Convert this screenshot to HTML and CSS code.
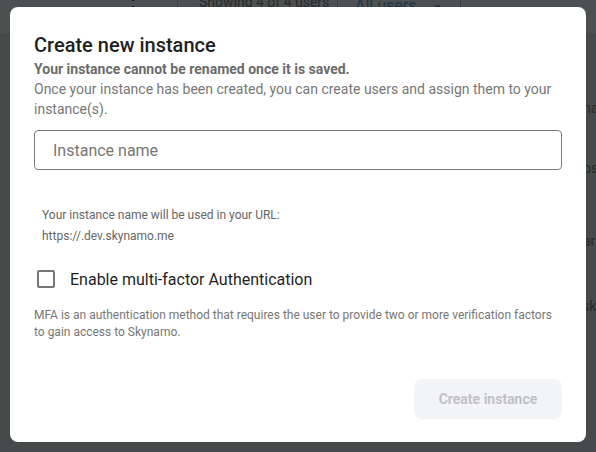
FILE: index.html
```html
<!DOCTYPE html>
<html>
<head>
<meta charset="utf-8">
<link rel="stylesheet" href="styles.css">
</head>
<body>
<div class="backdrop">
  <div class="bg-header">
    <span class="bg-dots">⋮</span>
    <span class="bg-divider"></span>
    <span class="bg-showing">Showing 4 of 4 users</span>
    <span class="bg-select">All users <span class="bg-caret">▼</span></span>
  </div>
  <div class="bg-right">
    <span class="bg-frag f1">na</span>
    <span class="bg-frag f2">os</span>
    <span class="bg-frag f3">ar</span>
    <span class="bg-frag f4">sk</span>
  </div>
</div>
<div class="dialog">
  <h1 class="title">Create new instance</h1>
  <p class="warn">Your instance cannot be renamed once it is saved.</p>
  <p class="desc">Once your instance has been created, you can create users and assign them to your instance(s).</p>
  <div class="field">Instance name</div>
  <div class="helper">
    <div>Your instance name will be used in your URL:</div>
    <div>https://.dev.skynamo.me</div>
  </div>
  <label class="check-row">
    <span class="checkbox"></span>
    <span class="check-label">Enable multi-factor Authentication</span>
  </label>
  <p class="mfa">MFA is an authentication method that requires the user to provide two or more verification factors to gain access to Skynamo.</p>
  <div class="actions">
    <button class="btn" disabled>Create instance</button>
  </div>
</div>
</body>
</html>
```
FILE: styles.css
```css
html, body {
  margin: 0;
  padding: 0;
  width: 596px;
  height: 452px;
  overflow: hidden;
  font-family: Roboto, "Liberation Sans", sans-serif;
}
body {
  background: #474a4a;
  position: relative;
}
.backdrop {
  position: absolute;
  inset: 0;
  color: #262a2c;
}
.bg-header {
  height: 33px;
  background: #4d5050;
  position: relative;
}
.bg-dots {
  position: absolute;
  left: 123px;
  top: -6px;
  font-size: 20px;
  color: #111;
}
.bg-divider {
  position: absolute;
  left: 177px;
  top: 0;
  width: 1px;
  height: 33px;
  background: #3f4242;
}
.bg-showing {
  position: absolute;
  left: 199px;
  top: -6px;
  font-size: 14px;
}
.bg-select {
  position: absolute;
  left: 337px;
  top: -10px;
  height: 24px;
  width: 124px;
  border: 1px solid #3a3d3e;
  border-radius: 4px;
  box-sizing: border-box;
  padding-left: 17px;
  padding-top: 5px;
  font-size: 16px;
  color: #1d3446;
}
.bg-caret {
  font-size: 10px;
  margin-left: 12px;
}
.bg-right {
  position: absolute;
  right: 0;
  top: 0;
  width: 10px;
  height: 452px;
}
.bg-frag {
  position: absolute;
  left: 0;
  font-size: 14px;
  color: #262a2c;
}
.f1 { top: 100px; left: -3px; }
.f2 { top: 160px; left: -3px; }
.f3 { top: 233px; left: -3px; }
.f4 { top: 298px; left: -4px; }

.dialog {
  position: absolute;
  left: 10px;
  top: 7px;
  width: 576px;
  height: 435px;
  box-sizing: border-box;
  background: #fff;
  border-radius: 8px;
  padding: 24px 24px 0 24px;
  display: flex;
  flex-direction: column;
}
.title {
  margin: 0;
  font-size: 20px;
  line-height: 28px;
  font-weight: 500;
  color: #1f1f1f;
}
.warn {
  margin: 0;
  font-size: 14px;
  line-height: 20px;
  font-weight: 700;
  color: #6b6b6b;
}
.desc {
  margin: 0;
  font-size: 14px;
  line-height: 20px;
  color: #777;
}
.field {
  margin-top: 11px;
  height: 40px;
  box-sizing: border-box;
  border: 1px solid #7a7a7a;
  border-radius: 4px;
  padding-left: 18px;
  display: flex;
  align-items: center;
  font-size: 16px;
  color: #767676;
}
.helper {
  margin-top: 35px;
  padding-left: 8px;
  font-size: 12px;
  line-height: 21px;
  color: #666;
}
.check-row {
  margin-top: 20px;
  display: flex;
  align-items: center;
  height: 24px;
}
.checkbox {
  width: 18px;
  height: 18px;
  box-sizing: border-box;
  border: 2px solid #777;
  border-radius: 2px;
  margin-left: 3px;
  margin-right: 15px;
}
.check-label {
  font-size: 16px;
  color: #1f1f1f;
}
.mfa {
  margin: 16px 0 0 0;
  font-size: 12px;
  line-height: 17px;
  color: #777;
}
.actions {
  margin-top: 38px;
  display: flex;
  justify-content: flex-end;
}
.btn {
  width: 148px;
  height: 40px;
  border: none;
  border-radius: 8px;
  background: #f3f4f8;
  color: #c2c2c4;
  font-family: Roboto, "Liberation Sans", sans-serif;
  font-size: 14px;
  font-weight: 700;
}
```
